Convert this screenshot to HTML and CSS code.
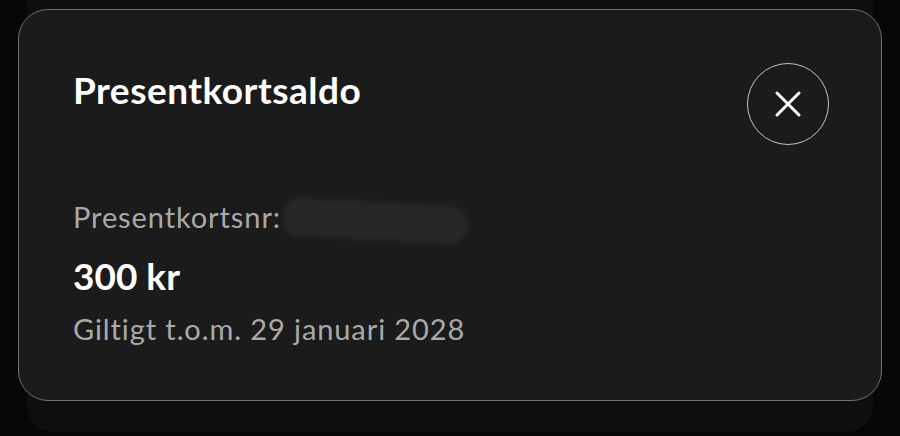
FILE: index.html
```html
<!DOCTYPE html>
<html lang="sv">
<head>
    <meta charset="UTF-8">
    <title>Presentkortsaldo</title>
    <link rel="stylesheet" href="styles.css">
</head>
<body>

<div class="sheet">
    <div class="card">
        <div class="card-head">
            <h2 class="title">Presentkortsaldo</h2>
            <button class="close-btn" aria-label="Stäng">
                <svg width="26" height="26" viewBox="0 0 26 26">
                    <path d="M2 2 L24 24 M24 2 L2 24" stroke="#fff" stroke-width="3" stroke-linecap="round" fill="none"/>
                </svg>
            </button>
        </div>

        <p class="card-nr">Presentkortsnr: <span class="hidden-nr"></span></p>
        <p class="amount">300 kr</p>
        <p class="valid">Giltigt t.o.m. 29 januari 2028</p>
    </div>
</div>

</body>
</html>
```

FILE: styles.css
```css
body {
    margin: 0;
    background-color: #070707;
    font-family: Lato, "Open Sans", sans-serif;
    color: #fff;
}
.sheet {
    margin: 0 27px;
    padding-top: 9px;
    height: 423px;
    background: #0e0e0e;
    border-radius: 0 0 26px 26px;
}
.card {
    margin: 0 -9px;
    height: 392px;
    box-sizing: border-box;
    padding: 53px 52px 0 54px;
    background: #1b1b1b;
    border: 1px solid #707070;
    border-radius: 30px;
}
.card-head {
    display: flex;
    justify-content: space-between;
    align-items: flex-start;
}
.title {
    margin: 5px 0 0;
    font-size: 37px;
    line-height: 44px;
    font-weight: 700;
    letter-spacing: 0.5px;
}
.close-btn {
    width: 82px;
    height: 82px;
    display: flex;
    align-items: center;
    justify-content: center;
    background: transparent;
    border: 1px solid #c4c4c4;
    border-radius: 50%;
    padding: 0;
}
.card-nr, .valid {
    margin: 0;
    font-size: 29px;
    line-height: 36px;
    letter-spacing: 0.9px;
    color: #a9a9a9;
}
.card-nr {
    margin-top: 54px;
}
.hidden-nr {
    display: inline-block;
    vertical-align: middle;
    width: 184px;
    height: 38px;
    margin-left: -5px;
    background: #272727;
    border-radius: 18px 26px 22px 16px;
    transform: rotate(3deg);
    filter: blur(2px);
}
.amount {
    margin: 14px 0 0;
    font-size: 37px;
    line-height: 44px;
    font-weight: 700;
}
.valid {
    margin-top: 13px;
}
```
